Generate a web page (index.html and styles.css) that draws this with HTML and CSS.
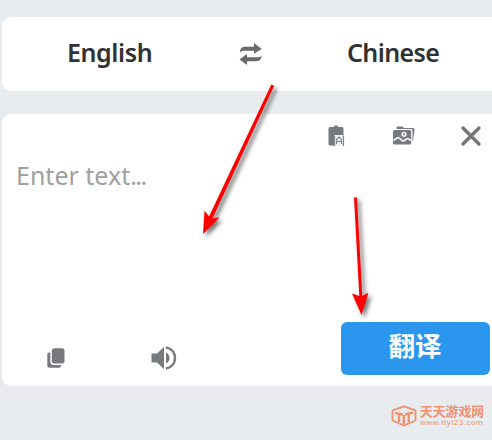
FILE: index.html
```
<!DOCTYPE html>
<html lang="en">
<head>
<meta charset="UTF-8">
<title>Translate</title>
<link rel="stylesheet" href="styles.css">
</head>
<body>
	<div id="box">
		<div class="lang">
			<span class="from">English</span>
			<svg class="swap" width="24" height="24" viewBox="0 0 24 24">
				<path d="M1 10.500C1 6.500 3 4.800 6 4.800H15V1L22.800 7L15 11.800V8.800H6C3.500 8.800 2.200 9 1 10.500Z"/>
				<path d="M22.500 13.500C22.500 17.500 20.500 19.200 17.500 19.200H8V23L0.500 17.500L8 12V15.200H17.500C20 15.200 21.300 15 22.500 13.500Z"/>
			</svg>
			<span class="to">Chinese</span>
		</div>
		<div class="panel">
			<div class="tools">
				<svg class="paste" width="18" height="22" viewBox="0 0 18 22">
					<path d="M2 2H6V0.500H10V2H14Q15.500 2 15.500 3.500V20.500H2Q0.500 20.500 0.500 19V3.500Q0.500 2 2 2Z"/>
					<path class="sheet" d="M6 10H16V21H6Z"/>
					<path class="line" d="M8.500 19V14.500L11 12L13.500 14.500V19M8.500 16.500H13.500M6.500 10.500V21M15.500 10.500V21"/>
				</svg>
				<svg class="photo" width="22" height="20" viewBox="0 0 22 20">
					<path d="M3.500 3V1.500Q3.500 0.500 4.500 0.500H9.500L11 2H20Q21.500 2 21.500 3.500L20 15H19.500V4.500Q19.500 3 18 3Z"/>
					<path d="M1.500 4H17Q18.200 4 18.200 5.500V17Q18.200 18.500 17 18.500H1.500Q0 18.500 0 17V5.500Q0 4 1.500 4Z"/>
					<path class="wave" d="M0.500 14.500L4.500 11.800Q5.500 11.300 6.500 12.300L9.500 14.700Q10.500 15.300 11.500 14.500L14 12.800Q15 12.300 17.800 14.500"/>
					<circle class="wave" cx="11" cy="8.300" r="1.800"/>
				</svg>
				<svg class="close" width="22" height="22" viewBox="0 0 22 22">
					<path d="M3 3L19 19M19 3L3 19"/>
				</svg>
			</div>
			<p class="tip">Enter text<i>...</i></p>
			<div class="foot">
				<svg class="copy" width="18" height="20" viewBox="0 0 18 20">
					<path d="M2 4.500H3.300V13.500Q3.300 17 7 17H14V18Q14 19.800 12 19.800H2.500Q0.300 19.800 0.300 17.500V6.500Q0.300 4.500 2 4.500Z"/>
					<rect x="4.800" y="0.200" width="12.700" height="15.300" rx="2.500"/>
				</svg>
				<svg class="sound" width="26" height="24" viewBox="0 0 26 24">
					<path d="M0.500 7.500H6L13 1V23L6 16.500H0.500Z"/>
					<path d="M15 6.500Q18.500 8.500 18.500 12Q18.500 15.500 15 17.500Z"/>
					<path class="arc" d="M15 1.600C21 2.500 24 7 24 12C24 17 21 21.500 15 22.400"/>
				</svg>
				<a class="btn" href="#">翻译</a>
			</div>
		</div>
		<div class="logo">
			<svg width="26" height="22" viewBox="0 0 26 22">
				<path d="M13 1.300L24.500 5.500V15.500L13 20.500L1.500 15.500V5.500Z"/>
				<path class="bold" d="M4 8L12 9.500M14 9.500L22 7.500M8 9V17M12.800 10V19.500M17.800 9V17.500"/>
			</svg>
			<div>
				<h3>天天游戏网</h3>
				<span>www.ttyl23.com</span>
			</div>
		</div>
		<svg class="arrows" width="492" height="440" viewBox="0 0 492 440">
			<g>
				<path d="M271.300 84.500L274.200 85.800L212.500 218.500L219.500 217.500L203 234L204.500 210.500L209 216.500Z"/>
				<path d="M354 197.500H357L362.300 296L368.500 292.500L361.500 315L352 293.500L359.300 296Z"/>
			</g>
		</svg>
	</div>
</body>
</html>
```
FILE: styles.css
```
body {margin: 0;background-color: #e8ecef;font-family: "Noto Sans","Noto Sans CJK SC",sans-serif;}
p, h3 {margin: 0;}
a {text-decoration: none;}
svg {display: block;flex: none;fill: #777a7d;}
#box {width: 492px;height: 440px;padding: 16.5px 0 0 2px;box-sizing: border-box;position: relative;overflow: hidden;}

.lang {width: 500px;height: 74.5px;border-radius: 9px;background-color: #fff;display: flex;align-items: center;}
.lang span {padding-bottom: 4px;font-size: 25px;line-height: 34px;font-weight: 600;letter-spacing: -0.6px;color: #303132;white-space: nowrap;}
.lang .from {width: 83px;margin-left: 65px;letter-spacing: -0.4px;}
.lang .swap {margin: 0 0 0 89px;fill: #6a6a6a;}
.lang .to {margin-left: 84px;}

.panel {width: 500px;height: 272.5px;margin-top: 22.5px;border-radius: 9px;background-color: #fff;display: flex;flex-direction: column;}
.tools {height: 44px;padding-left: 326px;display: flex;align-items: center;}
.tools .photo {margin-left: 47px;}
.tools .close {margin-left: 45px;fill: none;stroke: #747678;stroke-width: 3.4;stroke-linecap: round;}
.tools .sheet {fill: #eee;}
.tools .line {fill: none;stroke: #85878a;stroke-width: 1.2;}
.tools .wave {fill: none;stroke: #eee;stroke-width: 1.7;}
.tip {padding-left: 14px;font-size: 25px;line-height: 34px;color: #a0a0a0;white-space: nowrap;}
.tip i {font-style: normal;letter-spacing: -1.6px;}
.foot {margin-top: auto;height: 64px;padding-left: 45px;display: flex;align-items: flex-start;}
.foot .copy {margin-top: 26px;}
.foot .sound {margin: 24px 0 0 86px;}
.foot .arc {fill: none;stroke: #777a7d;stroke-width: 2.5;}
.foot .btn {width: 149px;height: 52.5px;margin-left: 163.5px;border-radius: 6px;background-color: #2b96ee;color: #fff;font-family: "Noto Sans CJK SC",sans-serif;font-size: 26.5px;font-weight: 700;line-height: 46px;text-align: center;}

.logo {margin: 19px 0 0 389px;display: flex;color: #f0916f;}
.logo svg {fill: none;stroke: #f0916f;stroke-width: 1.8;}
.logo .bold {stroke-width: 2.4;}
.logo div {margin-left: 3px;width: 70px;}
.logo h3 {font-family: "Noto Sans CJK SC",sans-serif;font-size: 12.8px;line-height: 12px;font-weight: 700;white-space: nowrap;}
.logo span {display: block;padding-top: 1px;font-family: "Liberation Sans",sans-serif;font-size: 8px;line-height: 10px;letter-spacing: 0.55px;white-space: nowrap;}

.arrows {position: absolute;left: 0;top: 0;pointer-events: none;}
.arrows g {fill: #f00;filter: drop-shadow(3px 3px 2px rgba(0,0,0,.55));}
```
